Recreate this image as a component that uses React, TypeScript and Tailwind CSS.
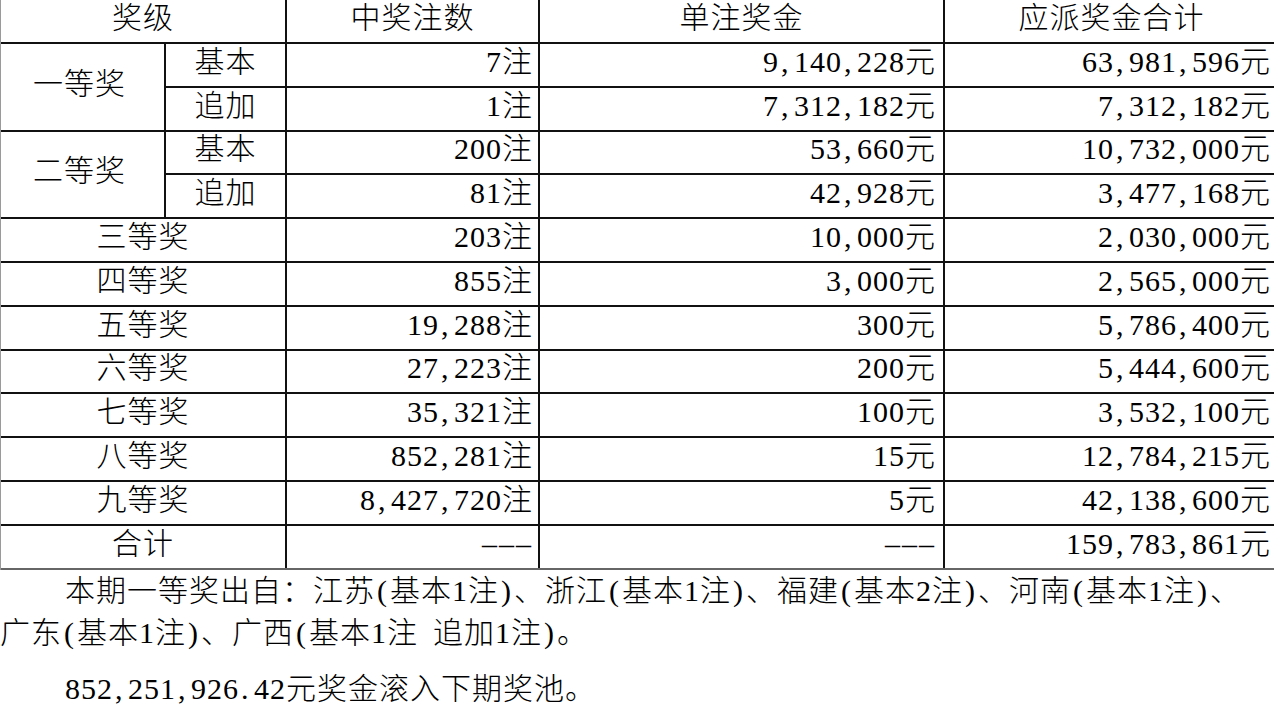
import type { ReactNode } from "react";

type Row = {
  level: string;
  sub?: string;
  span?: number;
  count: string;
  unit: string;
  total: string;
};

const ROWS: Row[] = [
  { level: "一等奖", sub: "基本", span: 2, count: "7注", unit: "9,140,228元", total: "63,981,596元" },
  { level: "", sub: "追加", count: "1注", unit: "7,312,182元", total: "7,312,182元" },
  { level: "二等奖", sub: "基本", span: 2, count: "200注", unit: "53,660元", total: "10,732,000元" },
  { level: "", sub: "追加", count: "81注", unit: "42,928元", total: "3,477,168元" },
  { level: "三等奖", count: "203注", unit: "10,000元", total: "2,030,000元" },
  { level: "四等奖", count: "855注", unit: "3,000元", total: "2,565,000元" },
  { level: "五等奖", count: "19,288注", unit: "300元", total: "5,786,400元" },
  { level: "六等奖", count: "27,223注", unit: "200元", total: "5,444,600元" },
  { level: "七等奖", count: "35,321注", unit: "100元", total: "3,532,100元" },
  { level: "八等奖", count: "852,281注", unit: "15元", total: "12,784,215元" },
  { level: "九等奖", count: "8,427,720注", unit: "5元", total: "42,138,600元" },
];

// SimSun-like text: punctuation such as , ( ) . and the space sit in a half-width cell like the digits
function hw(text: string): ReactNode {
  const out: ReactNode[] = [];
  let buf = "";
  Array.from(text).forEach((ch, i) => {
    if (ch === "," || ch === "." || ch === "(" || ch === ")" || ch === " ") {
      if (buf) out.push(buf);
      buf = "";
      out.push(
        <span
          key={i}
          className={`inline-block w-[15px] ${ch === "," || ch === "." ? "text-left pl-[2px]" : "text-center"}`}
        >
          {ch === " " ? "\u00a0" : ch}
        </span>
      );
    } else {
      buf += ch;
    }
  });
  if (buf) out.push(buf);
  return out;
}

const cell = "border-2 border-[#111] p-0 pb-[6px] align-middle";

function Dashes() {
  return <span className="tracking-[2px]">–––</span>;
}

export default function App() {
  return (
    <div
      className="w-[1274px] h-[705px] overflow-hidden bg-white text-black text-[30px] leading-none tracking-[1px] font-light"
      style={{ fontFamily: "'Liberation Serif', 'Noto Sans CJK SC', serif" }}
    >
      <div className="w-[1274px] overflow-hidden border-l border-[#9a9a9a]">
        <table className="w-[1278px] table-fixed border-collapse -mt-[2px]">
          <colgroup>
            <col className="w-[164px]" />
            <col className="w-[121px]" />
            <col className="w-[253px]" />
            <col className="w-[405px]" />
            <col className="w-[335px]" />
          </colgroup>
          <thead>
            <tr className="h-[44px]">
              <th colSpan={2} className={`${cell} border-l-0 font-light text-center`}>奖级</th>
              <th className={`${cell} font-light text-center`}>中奖注数</th>
              <th className={`${cell} font-light text-center`}>单注奖金</th>
              <th className={`${cell} font-light text-center`}>应派奖金合计</th>
            </tr>
          </thead>
          <tbody>
            {ROWS.map((r, i) => (
              <tr key={i} className="h-[43.8px]">
                {r.sub ? (
                  <>
                    {r.span && (
                      <td rowSpan={2} className={`${cell} border-l-0 text-center pr-[6px]`}>
                        {r.level}
                      </td>
                    )}
                    <td className={`${cell} text-center`}>{r.sub}</td>
                  </>
                ) : (
                  <td colSpan={2} className={`${cell} border-l-0 text-center`}>
                    {r.level}
                  </td>
                )}
                <td className={`${cell} text-right pr-[5px]`}>{hw(r.count)}</td>
                <td className={`${cell} text-right pr-[7px]`}>{hw(r.unit)}</td>
                <td className={`${cell} text-right pr-[7px]`}>{hw(r.total)}</td>
              </tr>
            ))}
            <tr className="h-[43.8px]">
              <td colSpan={2} className={`${cell} border-l-0 border-b-[#666] text-center`}>合计</td>
              <td className={`${cell} border-b-[#666] text-right pr-[5px]`}>
                <Dashes />
              </td>
              <td className={`${cell} border-b-[#666] text-right pr-[7px]`}>
                <Dashes />
              </td>
              <td className={`${cell} border-b-[#666] text-right pr-[7px]`}>{hw("159,783,861元")}</td>
            </tr>
          </tbody>
        </table>
      </div>

      <div className="leading-[42px] whitespace-nowrap">
        <p className="pl-[65px]">
          {hw("本期一等奖出自：江苏(基本1注)、浙江(基本1注)、福建(基本2注)、河南(基本1注)、")}
        </p>
        <p>{hw("广东(基本1注)、广西(基本1注 追加1注)。")}</p>
        <p className="mt-[14px] pl-[65px]">{hw("852,251,926.42元奖金滚入下期奖池。")}</p>
      </div>
    </div>
  );
}
